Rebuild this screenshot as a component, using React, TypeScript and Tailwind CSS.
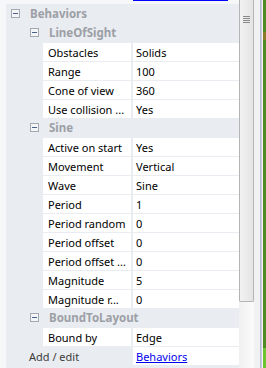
import React from "react";

type Row =
  | { kind: "cat"; label: string; level: 0 | 1 }
  | { kind: "prop"; name: string; value: string };

const rows: Row[] = [
  { kind: "cat", label: "Behaviors", level: 0 },
  { kind: "cat", label: "LineOfSight", level: 1 },
  { kind: "prop", name: "Obstacles", value: "Solids" },
  { kind: "prop", name: "Range", value: "100" },
  { kind: "prop", name: "Cone of view", value: "360" },
  { kind: "prop", name: "Use collision ...", value: "Yes" },
  { kind: "cat", label: "Sine", level: 1 },
  { kind: "prop", name: "Active on start", value: "Yes" },
  { kind: "prop", name: "Movement", value: "Vertical" },
  { kind: "prop", name: "Wave", value: "Sine" },
  { kind: "prop", name: "Period", value: "1" },
  { kind: "prop", name: "Period random", value: "0" },
  { kind: "prop", name: "Period offset", value: "0" },
  { kind: "prop", name: "Period offset ...", value: "0" },
  { kind: "prop", name: "Magnitude", value: "5" },
  { kind: "prop", name: "Magnitude r...", value: "0" },
  { kind: "cat", label: "BoundToLayout", level: 1 },
  { kind: "prop", name: "Bound by", value: "Edge" },
];

function Collapse() {
  return (
    <span className="flex h-[9px] w-[9px] shrink-0 items-center justify-center border border-[#a4a8b0] bg-[#f4f5f7]">
      <span className="h-px w-[5px] bg-[#4a5f8c]" />
    </span>
  );
}

function CategoryRow({ label, level }: { label: string; level: 0 | 1 }) {
  return (
    <div className={`flex h-[19px] items-center gap-[10px] overflow-hidden whitespace-nowrap ${level === 0 ? "pl-[5px]" : "pl-[24px]"}`}>
      <Collapse />
      <span className="text-[11.5px] font-bold text-[#9c9fa6]">{label}</span>
    </div>
  );
}

function PropRow({ name, value }: { name: string; value: string }) {
  return (
    <div className="flex h-[19px] pl-[37px] pt-px">
      <div className="flex w-[88px] items-center overflow-hidden whitespace-nowrap bg-white pl-[5px] text-[11px] text-black">{name}</div>
      <div className="ml-[2px] flex flex-1 items-center bg-white pl-[3px] text-[11px] text-black">{value}</div>
    </div>
  );
}

export default function App() {
  return (
    <div className="flex h-[368px] w-[266px] overflow-hidden bg-white font-['Noto_Sans',sans-serif] leading-none">
      <div className="flex w-[239px] flex-col">
        <div className="flex h-[4px] shrink-0 bg-[#f6f7f9]">
          <div className="ml-[133px] h-px w-[95px] bg-[#0000ff]" />
        </div>
        <div className="flex flex-1 flex-col bg-[#f6f7f9]">
          <div className="ml-[6px] flex flex-1 flex-col bg-[#e9ecf0]">
            {rows.map((r, i) =>
              r.kind === "cat" ? (
                <CategoryRow key={i} label={r.label} level={r.level} />
              ) : (
                <PropRow key={i} name={r.name} value={r.value} />
              )
            )}
            <div className="flex h-[19px] pt-px">
              <div className="flex w-[125px] items-center whitespace-nowrap pl-[23px] text-[11px] text-[#3c3c3c]">Add / edit</div>
              <div className="ml-[2px] flex flex-1 items-center bg-white pl-[3px] text-[11px] text-[#0000ee] underline">Behaviors</div>
            </div>
          </div>
        </div>
      </div>
      <div className="flex w-[15px] flex-col bg-gradient-to-r from-[#f0f0f0] to-[#fbfbfb]">
        <div className="flex h-[302px] flex-col items-center rounded-b-[2px] border-x border-b border-[#b4b4b4] bg-gradient-to-r from-[#f2f2f2] to-[#e4e4e4] pt-[16px]">
          <div className="flex w-[7px] flex-col gap-px">
            <span className="h-px bg-[#888]" />
            <span className="h-px bg-[#888]" />
            <span className="h-px bg-[#888]" />
            <span className="h-px bg-[#888]" />
          </div>
        </div>
      </div>
      <div className="w-[6px] bg-[#f0f1f3]" />
      <div className="w-px bg-[#b8bcc8]" />
      <div className="w-px bg-[#c8cce6]" />
      <div className="w-px bg-[#f4f4f4]" />
      <div className="flex w-[3px] flex-col bg-[#4f8a26]">
        <div className="h-[32px]" />
        <div className="h-[8px] bg-[#8c7a2c]" />
        <div className="flex-1" />
        <div className="h-[20px] bg-[#6cc530]" />
      </div>
    </div>
  );
}
